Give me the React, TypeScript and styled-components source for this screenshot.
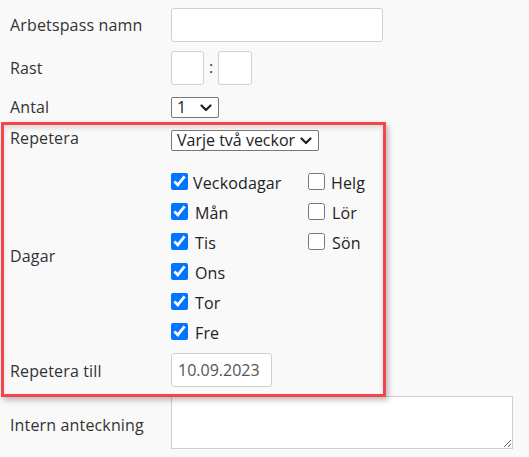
import React from "react";
import styled, { createGlobalStyle } from "styled-components";

const GlobalStyle = createGlobalStyle`
  html, body {
    margin: 0;
    padding: 0;
    background: #f9f9f9;
  }
  body {
    font-family: "Segoe UI", "Open Sans", sans-serif;
    font-size: 16px;
    color: #333;
  }
`;

const Page = styled.div`
  width: 529px;
  height: 457px;
  box-sizing: border-box;
  padding: 8px 0 0 10px;
  overflow: hidden;
`;

const Form = styled.div`
  display: flex;
  flex-direction: column;
`;

const Row = styled.div<{ $gap?: number }>`
  display: grid;
  grid-template-columns: 161px auto;
  align-items: center;
  margin-bottom: ${(p) => p.$gap ?? 0}px;
`;

const Label = styled.label<{ $shift?: number }>`
  font-size: 16px;
  line-height: 22px;
  letter-spacing: 0.15px;
  position: relative;
  top: ${(p) => p.$shift ?? 0}px;
`;

const TextInput = styled.input<{ $w: number }>`
  width: ${(p) => p.$w}px;
  height: 34px;
  box-sizing: border-box;
  border: 1px solid #cfcfcf;
  border-radius: 3px;
  background: #fff;
  padding: 0 6px;
  font-family: inherit;
  font-size: 16px;
  color: #555;
  outline: none;
`;

const TimeGroup = styled.div`
  display: flex;
  align-items: center;
`;

const Colon = styled.span`
  width: 14px;
  text-align: center;
  font-size: 16px;
  line-height: 20px;
  padding-bottom: 2px;
`;

const chevron =
  "data:image/svg+xml;utf8," +
  encodeURIComponent(
    '<svg xmlns="http://www.w3.org/2000/svg" width="12" height="8" viewBox="0 0 12 8"><path d="M1.5 1.5 L6 6 L10.5 1.5" fill="none" stroke="#222" stroke-width="2.2" stroke-linecap="round" stroke-linejoin="round"/></svg>'
  );

const Select = styled.select<{ $w: number }>`
  appearance: none;
  -webkit-appearance: none;
  width: ${(p) => p.$w}px;
  height: 21px;
  box-sizing: border-box;
  border: 1px solid #767676;
  border-radius: 2px;
  background: #fff url("${chevron}") no-repeat right 6px center;
  background-size: 12px 8px;
  padding: 0 20px 0 5px;
  font-family: inherit;
  font-size: 16px;
  line-height: 19px;
  color: #222;
  outline: none;
`;

const Highlight = styled.div`
  margin-left: -9px;
  width: 385px;
  box-sizing: border-box;
  border: 3px solid #f5454b;
  padding: 4px 0 7px 6px;
  box-shadow: 2px 3px 6px rgba(0, 0, 0, 0.28), inset 0 3px 5px rgba(0, 0, 0, 0.12);
  position: relative;
  z-index: 1;
`;

const DayGrid = styled.div`
  display: grid;
  grid-template-columns: 137px auto;
  grid-auto-flow: column;
  grid-template-rows: repeat(6, 30px);
`;

const DayColumn = styled.div`
  display: contents;
`;

const Check = styled.label`
  display: flex;
  align-items: center;
  height: 30px;
  font-size: 16px;
  letter-spacing: 0.15px;
  color: #222;
`;

const Box = styled.input`
  width: 17px;
  height: 17px;
  margin: 0 5px 0 0;
  accent-color: #0075ff;
`;

const CheckText = styled.span<{ $pad?: number }>`
  padding-top: 4px;
  padding-left: ${(p) => p.$pad ?? 0}px;
`;

const Note = styled.textarea`
  width: 342px;
  height: 53px;
  box-sizing: border-box;
  border: 1px solid #cfcfcf;
  background: #fff;
  font-family: inherit;
  font-size: 16px;
  outline: none;
`;

const weekdays = [
  { name: "Veckodagar", pad: 0 },
  { name: "Mån", pad: 2 },
  { name: "Tis", pad: 2 },
  { name: "Ons", pad: 2 },
  { name: "Tor", pad: 2 },
  { name: "Fre", pad: 2 },
];
const weekend = [
  { name: "Helg", pad: 1 },
  { name: "Lör", pad: 2 },
  { name: "Sön", pad: 2 },
];

const App: React.FC = () => {
  return (
    <Page>
      <GlobalStyle />
      <Form>
        <Row $gap={9}>
          <Label>Arbetspass namn</Label>
          <TextInput $w={212} />
        </Row>
        <Row $gap={11}>
          <Label>Rast</Label>
          <TimeGroup>
            <TextInput $w={33} />
            <Colon>:</Colon>
            <TextInput $w={34} />
          </TimeGroup>
        </Row>
        <Row $gap={4}>
          <Label>Antal</Label>
          <div>
            <Select $w={48} defaultValue="1">
              <option value="1">1</option>
              <option value="2">2</option>
            </Select>
          </div>
        </Row>
        <Highlight>
          <Row $gap={15}>
            <Label $shift={-2}>Repetera</Label>
            <div>
              <Select $w={148} defaultValue="2w">
                <option value="1w">Varje vecka</option>
                <option value="2w">Varje två veckor</option>
              </Select>
            </div>
          </Row>
          <Row $gap={7}>
            <Label>Dagar</Label>
            <DayGrid>
              <DayColumn>
                {weekdays.map((d) => (
                  <Check key={d.name}>
                    <Box type="checkbox" defaultChecked />
                    <CheckText $pad={d.pad}>{d.name}</CheckText>
                  </Check>
                ))}
              </DayColumn>
              <DayColumn>
                {weekend.map((d) => (
                  <Check key={d.name}>
                    <Box type="checkbox" />
                    <CheckText $pad={d.pad}>{d.name}</CheckText>
                  </Check>
                ))}
              </DayColumn>
            </DayGrid>
          </Row>
          <Row>
            <Label $shift={1}>Repetera till</Label>
            <TextInput $w={101} defaultValue="10.09.2023" />
          </Row>
        </Highlight>
        <Row style={{ marginTop: -1 }}>
          <Label $shift={2}>Intern anteckning</Label>
          <Note />
        </Row>
      </Form>
    </Page>
  );
};

export default App;
